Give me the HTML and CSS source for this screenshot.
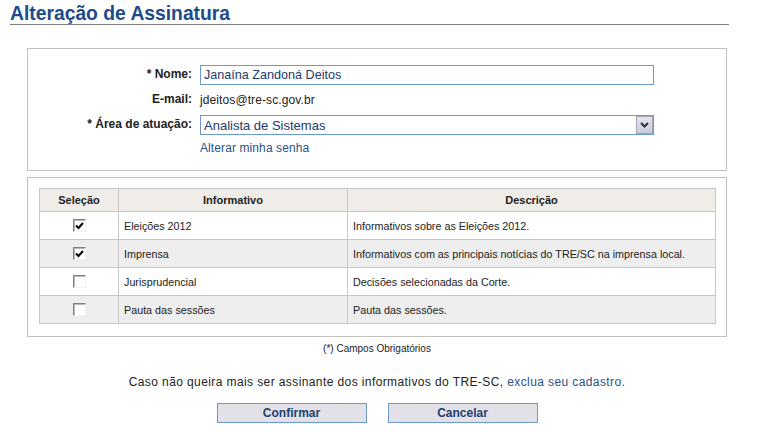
FILE: index.html
```html
<!DOCTYPE html>
<html lang="pt-BR">
<head>
<meta charset="utf-8">
<title>Alteração de Assinatura</title>
<link rel="stylesheet" href="styles.css">
</head>
<body>
<div class="page">
  <h1 class="title">Alteração de Assinatura</h1>

  <div class="box box-form">
    <div class="form">
      <label class="lbl" for="nome">* Nome:</label>
      <input class="field" id="nome" type="text" value="Janaína Zandoná Deitos">

      <span class="lbl">E-mail:</span>
      <span class="value">jdeitos@tre-sc.gov.br</span>

      <span class="lbl">* Área de atuação:</span>
      <div class="select">
        <span class="select-text">Analista de Sistemas</span>
        <span class="select-btn">
          <svg width="9" height="6" viewBox="0 0 9 6"><path d="M1 1 L4.5 4.5 L8 1" fill="none" stroke="#333" stroke-width="2"/></svg>
        </span>
      </div>

      <span class="lbl"></span>
      <a class="link" href="#">Alterar minha senha</a>
    </div>
  </div>

  <div class="box box-table">
    <table class="grid">
      <colgroup>
        <col class="c1"><col class="c2"><col class="c3">
      </colgroup>
      <thead>
        <tr><th>Seleção</th><th>Informativo</th><th>Descrição</th></tr>
      </thead>
      <tbody>
        <tr>
          <td class="chk"><span class="cb on"><svg width="9" height="8" viewBox="0 0 9 8"><path d="M1 3.5 L3.5 6 L8 1" fill="none" stroke="#000" stroke-width="2"/></svg></span></td>
          <td>Eleições 2012</td>
          <td>Informativos sobre as Eleições 2012.</td>
        </tr>
        <tr class="alt">
          <td class="chk"><span class="cb on"><svg width="9" height="8" viewBox="0 0 9 8"><path d="M1 3.5 L3.5 6 L8 1" fill="none" stroke="#000" stroke-width="2"/></svg></span></td>
          <td>Imprensa</td>
          <td>Informativos com as principais notícias do TRE/SC na imprensa local.</td>
        </tr>
        <tr>
          <td class="chk"><span class="cb"></span></td>
          <td>Jurisprudencial</td>
          <td>Decisões selecionadas da Corte.</td>
        </tr>
        <tr class="alt">
          <td class="chk"><span class="cb"></span></td>
          <td>Pauta das sessões</td>
          <td>Pauta das sessões.</td>
        </tr>
      </tbody>
    </table>
  </div>

  <div class="footer">
    <p class="req">(*) Campos Obrigatórios</p>
    <p class="note">Caso não queira mais ser assinante dos informativos do TRE-SC, <a class="link" href="#">exclua seu cadastro.</a></p>
    <div class="actions">
      <button class="btn" type="button">Confirmar</button>
      <button class="btn" type="button">Cancelar</button>
    </div>
  </div>
</div>
</body>
</html>
```

FILE: styles.css
```css
* { box-sizing: border-box; }

body {
  margin: 0;
  background: #ffffff;
  font-family: "Liberation Sans", Arial, sans-serif;
  color: #222222;
}

.page {
  padding-left: 10px;
  width: 740px;
}

.title {
  margin: 0;
  width: 719px;
  padding-top: 4px;
  font-size: 19.3px;
  line-height: 20px;
  font-weight: bold;
  color: #1d4b89;
  border-bottom: 1px solid #808080;
}

.box {
  margin-left: 17px;
  width: 700px;
  border: 1px solid #c4c1bc;
}

.box-form {
  margin-top: 23px;
  padding: 16px 0 14px 0;
}

.form {
  display: grid;
  grid-template-columns: 164px 454px;
  grid-template-rows: 20px 30px 20px auto;
  column-gap: 8px;
  align-items: center;
}

.lbl {
  text-align: right;
  font-size: 12px;
  font-weight: bold;
  color: #222222;
  line-height: 14px;
  align-self: center;
  margin-top: -2px;
}

.field {
  height: 20px;
  width: 454px;
  margin: 0;
  border: 1px solid #6d9acb;
  padding: 0 3px;
  font-family: "Liberation Sans", Arial, sans-serif;
  font-size: 12.6px;
  color: #1c3a6a;
  background: #ffffff;
  outline: none;
}

.value {
  font-size: 12px;
  color: #222222;
  line-height: 14px;
  letter-spacing: 0.1px;
}

.select {
  display: flex;
  align-items: center;
  height: 20px;
  border: 1px solid #6d9acb;
  background: #ffffff;
}

.select-text {
  flex: 1;
  padding-left: 3px;
  font-size: 13px;
  color: #1c3a6a;
}

.select-btn {
  width: 17px;
  height: 18px;
  border: 1px solid #a2a6b8;
  background: linear-gradient(#e4e6ee, #c8cbda);
  display: flex;
  align-items: center;
  justify-content: center;
}

.link {
  color: #2b4f8a;
  text-decoration: none;
  font-size: 12px;
}

.form .link {
  padding-top: 5px;
  line-height: 16px;
  letter-spacing: 0.1px;
}

.box-table {
  margin-top: 6px;
  padding: 10px 12px 12px 11px;
}

.grid {
  border-collapse: collapse;
  width: 676px;
  table-layout: fixed;
  font-size: 10.75px;
}

.c1 { width: 79px; }
.c2 { width: 229px; }
.c3 { width: 368px; }

.grid th,
.grid td {
  border: 1px solid #c6c6c6;
  padding: 0 5px;
}

.grid th {
  height: 23px;
  background: #f0ede8;
  font-weight: bold;
  text-align: center;
  color: #222222;
  font-size: 11px;
}

.grid td {
  height: 28px;
  color: #222222;
}

.grid tr.alt td {
  background: #eeeeee;
}

.grid td.chk {
  text-align: center;
  padding: 0;
}

.cb {
  display: inline-flex;
  align-items: center;
  justify-content: center;
  vertical-align: middle;
  width: 13px;
  height: 13px;
  background: #ffffff;
  border: 1px solid;
  border-color: #808080 #f2f2f2 #f2f2f2 #808080;
  box-shadow: inset 1px 1px 0 #b8b8b8;
}

.footer {
  margin-left: 17px;
  width: 700px;
  text-align: center;
}

.req {
  margin: 6px 0 0 0;
  font-size: 10px;
  line-height: 12px;
  color: #222222;
}

.note {
  margin: 19px 0 0 0;
  font-size: 12px;
  line-height: 16px;
  color: #222222;
  letter-spacing: 0.4px;
}

.note .link {
  letter-spacing: 0.4px;
}

.actions {
  margin-top: 13px;
  display: flex;
  justify-content: center;
  gap: 21px;
}

.btn {
  width: 150px;
  height: 20px;
  margin: 0;
  padding: 0;
  border: 1px solid #6d9acb;
  background: #e1e1e7;
  font-family: "Liberation Sans", Arial, sans-serif;
  font-size: 12px;
  font-weight: bold;
  color: #1f3f6f;
}
```
